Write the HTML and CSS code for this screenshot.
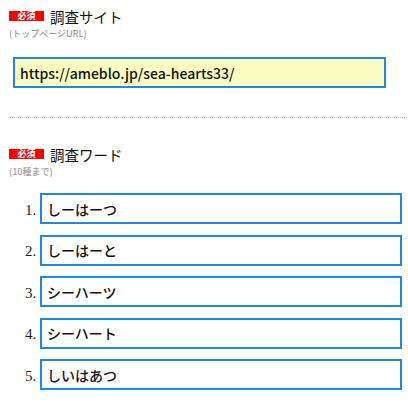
FILE: index.html
```html
<!DOCTYPE html>
<html lang="ja">
<head>
  <meta charset="UTF-8">
  <title>調査設定</title>
  <link rel="stylesheet" href="styles.css">
</head>
<body>
  <div class="field">
    <div class="field-head">
      <span class="badge">必須</span>
      <span class="field-title">調査サイト</span>
    </div>
    <div class="field-note">(トップページURL)</div>
    <input class="url-input" type="text" value="https://ameblo.jp/sea-hearts33/">
  </div>

  <hr class="divider">

  <div class="field">
    <div class="field-head">
      <span class="badge">必須</span>
      <span class="field-title">調査ワード</span>
    </div>
    <div class="field-note">(10種まで)</div>
    <ol class="word-list">
      <li><input class="word-input" type="text" value="しーはーつ"></li>
      <li><input class="word-input" type="text" value="しーはーと"></li>
      <li><input class="word-input" type="text" value="シーハーツ"></li>
      <li><input class="word-input" type="text" value="シーハート"></li>
      <li><input class="word-input" type="text" value="しいはあつ"></li>
    </ol>
  </div>
</body>
</html>
```

FILE: styles.css
```css
body {
  margin: 0;
  padding: 5px 3px 0 9px;
  font-family: "Noto Sans CJK JP", "Noto Sans", sans-serif;
  color: #222;
  background: #fff;
}

.field-head {
  display: flex;
  align-items: center;
  gap: 6px;
  height: 22px;
}

.badge {
  display: inline-block;
  width: 35px;
  height: 10px;
  line-height: 10px;
  background: #f00;
  color: #fff;
  font-size: 9px;
  font-weight: bold;
  text-align: center;
}

.field-title {
  font-size: 14.5px;
  color: #111;
}

.field-note {
  font-size: 9px;
  line-height: 14px;
  font-weight: 500;
  color: #a0a0a0;
}

.url-input {
  display: block;
  box-sizing: border-box;
  margin: 16px 0 0 4px;
  width: 373px;
  height: 31px;
  padding: 0 5px;
  border: 2px solid #1e88e5;
  background: #fafcc2;
  font-family: "Noto Sans CJK JP", "Noto Sans", sans-serif;
  font-size: 14px;
  font-weight: 500;
  color: #111;
  outline: none;
}

.divider {
  margin: 29px 0 0 0;
  border: none;
  border-top: 1px dotted #bbb;
}

.divider + .field {
  margin-top: 25px;
}

.word-list {
  margin: 14px 0 0 0;
  padding-left: 31px;
  font-family: "Liberation Serif", serif;
  font-size: 15px;
  color: #222;
}

.word-list li {
  margin-bottom: 10.5px;
}

.word-input {
  box-sizing: border-box;
  width: 362px;
  height: 31px;
  padding: 0 5px;
  border: 2px solid #1e88e5;
  background: #fff;
  font-family: "Noto Sans CJK JP", "Noto Sans", sans-serif;
  font-size: 14px;
  font-weight: 500;
  color: #111;
  outline: none;
  vertical-align: baseline;
}
```
